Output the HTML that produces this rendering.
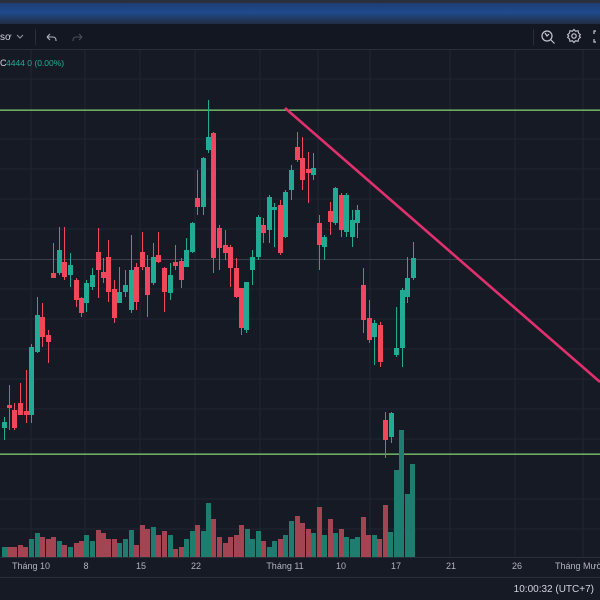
<!DOCTYPE html>
<html><head><meta charset="utf-8"><style>
html,body{margin:0;padding:0;width:600px;height:600px;overflow:hidden;background:#161a25;font-family:"Liberation Sans","Noto Sans CJK SC",sans-serif}
svg{display:block}
</style></head><body>
<svg width="600" height="600" viewBox="0 0 600 600" xmlns="http://www.w3.org/2000/svg">
<defs><linearGradient id="bl" x1="0" y1="0" x2="0" y2="1">
<stop offset="0" stop-color="#2a2f3e"/><stop offset="0.15" stop-color="#1d3f78"/><stop offset="0.5" stop-color="#1f4a8c"/><stop offset="1" stop-color="#232a3a"/></linearGradient></defs>
<rect width="600" height="600" fill="#161a25"/>
<rect y="0" width="600" height="25" fill="url(#bl)"/>
<rect y="0" width="600" height="3" fill="#2b2f3c"/>
<rect y="24" width="600" height="26" fill="#131722"/>
<rect y="49" width="600" height="1" fill="#2a2e39"/>
<text x="0" y="40" fill="#d1d4dc" font-size="10">sơ</text>
<path d="M17 35l3 3 3-3" stroke="#9598a1" fill="none" stroke-width="1"/>
<rect x="35" y="29" width="1" height="16" fill="#2a2e39"/>
<path d="M47 37h6a3 3 0 0 1 3 3v1M47 37l3-3M47 37l3 3" stroke="#b2b5be" fill="none" stroke-width="1.1"/>
<path d="M82 37h-6a3 3 0 0 0-3 3v1M82 37l-3-3M82 37l-3 3" stroke="#4a4e59" fill="none" stroke-width="1.1"/>
<rect x="533" y="29" width="1" height="16" fill="#2a2e39"/>
<circle cx="547" cy="36" r="5" stroke="#c4c7cf" fill="none" stroke-width="1.2"/>
<path d="M550.5 39.5l4 4M545 33l2 3 2-2" stroke="#c4c7cf" fill="none" stroke-width="1.2"/>
<circle cx="574" cy="36" r="2.2" stroke="#c4c7cf" fill="none" stroke-width="1.2"/>
<path d="M574 29.5l1.6 1.8 2.4-.6.6 2.4 1.8 1.6-1.2 1.3 1.2 1.3-1.8 1.6-.6 2.4-2.4-.6-1.6 1.8-1.6-1.8-2.4.6-.6-2.4-1.8-1.6 1.2-1.3-1.2-1.3 1.8-1.6.6-2.4 2.4.6z" stroke="#c4c7cf" fill="none" stroke-width="1.1"/>
<path d="M596 31h-2v3M596 42h-2v-3" stroke="#c4c7cf" fill="none" stroke-width="1.2"/>
<!-- grid -->
<g stroke="#222632" stroke-width="1">
<path d="M31 50V557M85 50V557M140 50V557M195 50V557M260 50V557M318 50V557M370 50V557M450 50V557M515 50V557M583 50V557"/>
<path d="M0 139H600M0 199H600M0 229H600M0 289H600M0 319H600M0 349H600M0 379H600M0 409H600M0 439H600M0 499H600M0 529H600M0 169H600M0 79H600"/>
</g>
<rect x="0" y="557" width="600" height="1" fill="#2a2e39"/>
<rect x="0" y="577" width="600" height="1" fill="#2a2e39"/>
<text x="0" y="66" fill="#d1d4dc" font-size="9">C</text>
<text x="6" y="66" fill="#22ab94" font-size="8.5">4444  0 (0.00%)</text>
<!-- levels -->
<rect x="0" y="109.5" width="600" height="1.3" fill="#7fcf6f"/>
<rect x="0" y="453.5" width="600" height="1.3" fill="#7fcf6f"/>
<rect x="0" y="259" width="600" height="1" fill="#3a3f4c"/>
<!-- volume -->
<g fill="#a24452">
<rect x="2" y="547" width="5" height="10" fill="#1e7d6f"/><rect x="7" y="547" width="5" height="10"/><rect x="12" y="547" width="5" height="10"/><rect x="18" y="545" width="5" height="12"/><rect x="23" y="547" width="5" height="10"/><rect x="29" y="539" width="5" height="18" fill="#1e7d6f"/><rect x="35" y="533" width="5" height="24" fill="#1e7d6f"/><rect x="40" y="537" width="5" height="20"/><rect x="46" y="539" width="5" height="18"/><rect x="51" y="537" width="5" height="20"/><rect x="57" y="541" width="5" height="16" fill="#1e7d6f"/><rect x="62" y="545" width="5" height="12"/><rect x="68" y="547" width="5" height="10" fill="#1e7d6f"/><rect x="74" y="543" width="5" height="14"/><rect x="79" y="541" width="5" height="16"/><rect x="84" y="535" width="5" height="22" fill="#1e7d6f"/><rect x="90" y="541" width="5" height="16" fill="#1e7d6f"/><rect x="96" y="530" width="5" height="27"/><rect x="101" y="533" width="5" height="24"/><rect x="106" y="539" width="5" height="18"/><rect x="112" y="539" width="5" height="18"/><rect x="117" y="543" width="5" height="14" fill="#1e7d6f"/><rect x="123" y="539" width="5" height="18" fill="#1e7d6f"/><rect x="129" y="530" width="5" height="27" fill="#1e7d6f"/><rect x="134" y="545" width="5" height="12"/><rect x="140" y="525" width="5" height="32"/><rect x="145" y="529" width="5" height="28"/><rect x="151" y="527" width="5" height="30" fill="#1e7d6f"/><rect x="156" y="535" width="5" height="22"/><rect x="162" y="531" width="5" height="26"/><rect x="168" y="535" width="5" height="22" fill="#1e7d6f"/><rect x="173" y="549" width="5" height="8"/><rect x="179" y="547" width="5" height="10"/><rect x="184" y="539" width="5" height="18" fill="#1e7d6f"/><rect x="190" y="531" width="5" height="26" fill="#1e7d6f"/><rect x="195" y="525" width="5" height="32"/><rect x="201" y="531" width="5" height="26" fill="#1e7d6f"/><rect x="206" y="503" width="5" height="54" fill="#1e7d6f"/><rect x="211" y="519" width="5" height="38"/><rect x="217" y="537" width="5" height="20"/><rect x="223" y="543" width="5" height="14"/><rect x="228" y="537" width="5" height="20"/><rect x="234" y="535" width="5" height="22"/><rect x="239" y="525" width="5" height="32"/><rect x="245" y="529" width="5" height="28" fill="#1e7d6f"/><rect x="250" y="539" width="5" height="18" fill="#1e7d6f"/><rect x="256" y="531" width="5" height="26" fill="#1e7d6f"/><rect x="261" y="541" width="5" height="16"/><rect x="267" y="547" width="5" height="10" fill="#1e7d6f"/><rect x="272" y="541" width="5" height="16" fill="#1e7d6f"/><rect x="278" y="539" width="5" height="18"/><rect x="283" y="535" width="5" height="22" fill="#1e7d6f"/><rect x="289" y="521" width="5" height="36" fill="#1e7d6f"/><rect x="295" y="516" width="5" height="41"/><rect x="300" y="523" width="5" height="34"/><rect x="306" y="529" width="5" height="28"/><rect x="311" y="533" width="5" height="24" fill="#1e7d6f"/><rect x="317" y="507" width="5" height="50"/><rect x="322" y="535" width="5" height="22" fill="#1e7d6f"/><rect x="328" y="519" width="5" height="38"/><rect x="333" y="533" width="5" height="24" fill="#1e7d6f"/><rect x="339" y="529" width="5" height="28"/><rect x="344" y="537" width="5" height="20" fill="#1e7d6f"/><rect x="350" y="539" width="5" height="18" fill="#1e7d6f"/><rect x="355" y="537" width="5" height="20" fill="#1e7d6f"/><rect x="361" y="517" width="5" height="40"/><rect x="366" y="535" width="5" height="22"/><rect x="372" y="535" width="5" height="22" fill="#1e7d6f"/><rect x="377" y="539" width="5" height="18"/><rect x="383" y="505" width="5" height="52"/><rect x="388" y="532" width="5" height="25" fill="#1e7d6f"/><rect x="394" y="470" width="5" height="87" fill="#1e7d6f"/><rect x="399" y="430" width="5" height="127" fill="#1e7d6f"/><rect x="405" y="494" width="5" height="63" fill="#1e7d6f"/><rect x="410" y="464" width="5" height="93" fill="#1e7d6f"/>
</g>
<!-- candles: wicks then bodies -->
<g stroke-width="1">
<g stroke="#22ab94"><path d="M4.5 417V440M31.5 344V423M37.5 297V353M59.5 227V275M70.5 253V287M86.5 280V312M92.5 268V290M119.5 267V303M125.5 270V297M131.5 235V313M153.5 243V285M170.5 263V300M186.5 238V267M192.5 222V253M203.5 157V215M208.5 100V153M246.5 282V333M252.5 250V285M258.5 215V260M269.5 195V243M274.5 203V247M285.5 190V238M291.5 165V200M313.5 153V180M324.5 235V260M335.5 187V225M346.5 193V237M352.5 210V247M357.5 205V238M374.5 320V365M391.5 412V443M396.5 307V357M402.5 288V367M407.5 257V303M413.5 242V280"/></g>
<g stroke="#f0475d"><path d="M9.5 385V430M14.5 403V430M20.5 383V415M26.5 370V423M42.5 303V347M48.5 330V363M53.5 243V278M64.5 227V280M76.5 278V307M81.5 297V317M98.5 228V298M103.5 258V283M108.5 240V302M114.5 280V323M136.5 263V310M142.5 232V270M147.5 255V317M158.5 232V263M164.5 267V312M175.5 245V270M181.5 258V288M197.5 170V215M213.5 132V273M219.5 225V270M225.5 230V260M230.5 245V287M236.5 258V298M241.5 288V335M263.5 218V243M280.5 200V255M297.5 132V162M302.5 137V190M308.5 152V203M319.5 215V270M330.5 202V235M341.5 193V237M363.5 268V333M369.5 300V343M380.5 322V367M385.5 412V458"/></g>
<g fill="#22ab94"><rect x="2" y="422" width="5" height="6"/><rect x="29" y="347" width="5" height="68"/><rect x="35" y="315" width="5" height="37"/><rect x="57" y="250" width="5" height="23"/><rect x="68" y="265" width="5" height="10"/><rect x="84" y="283" width="5" height="20"/><rect x="90" y="275" width="5" height="12"/><rect x="117" y="292" width="5" height="11"/><rect x="123" y="285" width="5" height="7"/><rect x="129" y="270" width="5" height="40"/><rect x="151" y="257" width="5" height="26"/><rect x="168" y="275" width="5" height="18"/><rect x="184" y="250" width="5" height="17"/><rect x="190" y="223" width="5" height="29"/><rect x="201" y="158" width="5" height="49"/><rect x="206" y="137" width="5" height="13"/><rect x="244" y="282" width="5" height="48"/><rect x="250" y="257" width="5" height="13"/><rect x="256" y="217" width="5" height="40"/><rect x="267" y="197" width="5" height="33"/><rect x="272" y="207" width="5" height="3"/><rect x="283" y="192" width="5" height="45"/><rect x="289" y="170" width="5" height="20"/><rect x="311" y="168" width="5" height="7"/><rect x="322" y="237" width="5" height="10"/><rect x="333" y="188" width="5" height="35"/><rect x="344" y="195" width="5" height="37"/><rect x="350" y="220" width="5" height="17"/><rect x="355" y="210" width="5" height="13"/><rect x="372" y="323" width="5" height="14"/><rect x="389" y="413" width="5" height="24"/><rect x="394" y="348" width="5" height="7"/><rect x="400" y="290" width="5" height="58"/><rect x="405" y="278" width="5" height="19"/><rect x="411" y="258" width="5" height="20"/></g>
<g fill="#f0475d"><rect x="7" y="405" width="5" height="3"/><rect x="12" y="410" width="5" height="18"/><rect x="18" y="403" width="5" height="12"/><rect x="24" y="411" width="5" height="4"/><rect x="40" y="317" width="5" height="20"/><rect x="46" y="335" width="5" height="7"/><rect x="51" y="273" width="5" height="5"/><rect x="62" y="262" width="5" height="15"/><rect x="74" y="280" width="5" height="20"/><rect x="79" y="298" width="5" height="15"/><rect x="96" y="252" width="5" height="18"/><rect x="101" y="272" width="5" height="6"/><rect x="106" y="257" width="5" height="35"/><rect x="112" y="289" width="5" height="29"/><rect x="134" y="267" width="5" height="35"/><rect x="140" y="252" width="5" height="15"/><rect x="145" y="267" width="5" height="28"/><rect x="156" y="255" width="5" height="7"/><rect x="162" y="268" width="5" height="24"/><rect x="173" y="262" width="5" height="4"/><rect x="179" y="261" width="5" height="19"/><rect x="195" y="198" width="5" height="9"/><rect x="211" y="133" width="5" height="125"/><rect x="217" y="228" width="5" height="20"/><rect x="223" y="245" width="5" height="8"/><rect x="228" y="247" width="5" height="21"/><rect x="234" y="268" width="5" height="29"/><rect x="239" y="288" width="5" height="40"/><rect x="261" y="225" width="5" height="8"/><rect x="278" y="205" width="5" height="48"/><rect x="295" y="147" width="5" height="13"/><rect x="300" y="158" width="5" height="22"/><rect x="306" y="169" width="5" height="4"/><rect x="317" y="223" width="5" height="22"/><rect x="328" y="211" width="5" height="11"/><rect x="339" y="195" width="5" height="35"/><rect x="361" y="285" width="5" height="35"/><rect x="367" y="318" width="5" height="22"/><rect x="378" y="325" width="5" height="37"/><rect x="383" y="420" width="5" height="20"/></g>
</g>
<line x1="285" y1="108" x2="600" y2="382" stroke="#e0306d" stroke-width="2.6"/>
<!-- axis labels -->
<g fill="#b2b5be" font-size="9" text-anchor="middle">
<text x="31" y="569">Tháng 10</text><text x="86" y="569">8</text><text x="141" y="569">15</text><text x="196" y="569">22</text><text x="285" y="569">Tháng 11</text><text x="341" y="569">10</text><text x="396" y="569">17</text><text x="451" y="569">21</text><text x="517" y="569">26</text>
<text x="555" y="569" text-anchor="start">Tháng Mười</text>
</g>
<text x="594" y="592" fill="#d1d4dc" font-size="10" text-anchor="end">10:00:32 (UTC+7)</text>
</svg>
</body></html>
